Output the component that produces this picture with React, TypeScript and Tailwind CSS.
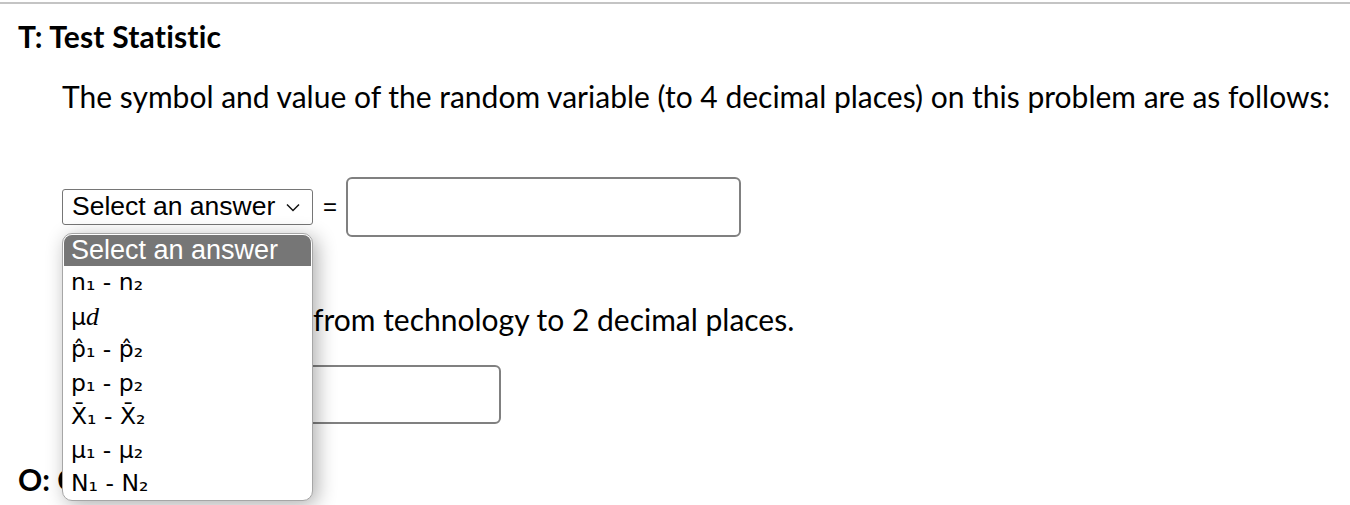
import { useState } from 'react';

const options: { id: string; label: React.ReactNode }[] = [
  { id: 'n', label: <>n₁ - n₂</> },
  { id: 'mud', label: <>μ<span className="italic font-['Liberation_Serif',serif] text-[26px]">d</span></> },
  { id: 'phat', label: <>p̂₁ - p̂₂</> },
  { id: 'p', label: <>p₁ - p₂</> },
  { id: 'xbar', label: <>X̄₁ - X̄₂</> },
  { id: 'mu', label: <>μ₁ - μ₂</> },
  { id: 'N', label: <>N₁ - N₂</> },
];

function Chevron() {
  return (
    <svg width="14" height="9" viewBox="0 0 14 9" fill="none" stroke="#111" strokeWidth="1.5">
      <path d="M1 1.5 L7 7.5 L13 1.5" />
    </svg>
  );
}

export default function App() {
  const [open] = useState(true);

  return (
    <div className="w-[1350px] h-[505px] overflow-hidden bg-white text-black font-['Lato',sans-serif]">
      <div className="mt-[2px] h-[2px] bg-[#c4c4c4]" />
      <div className="relative pl-[18px]">
        <h3 className="pt-[17px] text-[30px] leading-[30px] font-bold tracking-[0.2px]">T: Test Statistic</h3>

        <div className="pl-[44px]">
          <p className="mt-[29px] text-[30px] leading-[32px]">
            The symbol and value of the random variable (to 4 decimal places) on this problem are as follows:
          </p>

          <div className="mt-[65px] flex items-center">
            <div className="flex items-center justify-between w-[251px] h-[36px] border border-[#767676] rounded-[3px] pl-[9px] pr-[12px] font-['Liberation_Sans',Arial,sans-serif] text-[26.5px]">
              <span>Select an answer</span>
              <Chevron />
            </div>
            <span className="ml-[10px] mr-[9px] font-['Liberation_Sans',Arial,sans-serif] text-[24px]">=</span>
            <div className="w-[395px] h-[60px] border-2 border-[#808080] rounded-[6px]" />
          </div>

          <p className="mt-[66px] text-[30px] leading-[32px]">
            <span className="inline-block w-[251px]">Give the value</span>from technology to 2 decimal places.
          </p>

          <div className="mt-[30px] flex items-center">
            <span className="text-[30px] w-[45px]">t =</span>
            <div className="w-[394px] h-[59px] border-2 border-[#808080] rounded-[6px]" />
          </div>
        </div>

        <h3 className="mt-[40px] text-[30px] leading-[30px] font-bold">O: Conclusion</h3>

        {open && (
          <div className="absolute left-[44px] top-[229px] ml-[18px] w-[251px] h-[268px] bg-white border border-[#a6a6a6] rounded-[10px] shadow-[4px_4px_20px_rgba(0,0,0,0.32)] overflow-hidden">
            <div className="h-[31px] mt-[1px] mx-[1px] rounded-t-[8px] bg-[#767676] text-white pl-[7px] font-['Liberation_Sans',Arial,sans-serif] text-[27px] leading-[31px]">
              Select an answer
            </div>
            {options.map((o) => (
              <div key={o.id} className="h-[33.5px] pl-[8px] font-['DejaVu_Sans',sans-serif] text-[23.5px] leading-[33.5px] whitespace-nowrap">
                {o.label}
              </div>
            ))}
          </div>
        )}
      </div>
    </div>
  );
}
